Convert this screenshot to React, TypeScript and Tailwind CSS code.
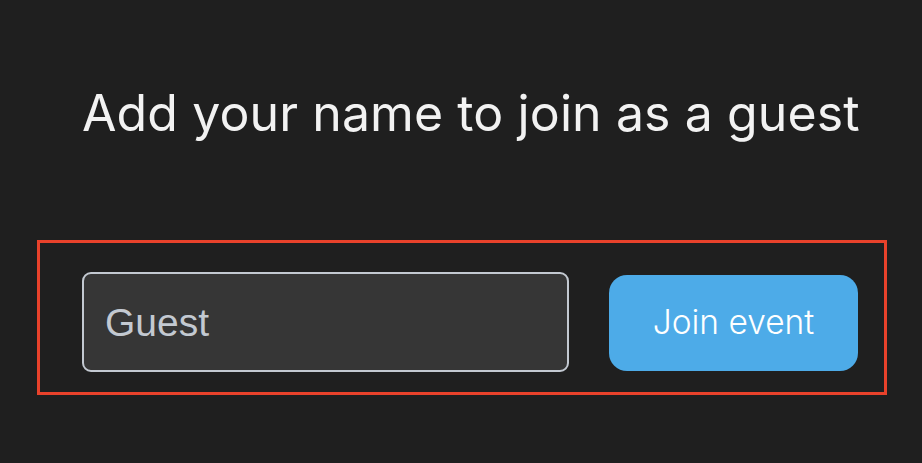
import React from "react";

export default function App() {
  return (
    <div className="w-[922px] h-[463px] bg-[#1f1f1f] flex flex-col overflow-hidden" style={{ fontFamily: "Inter, 'Noto Sans', sans-serif" }}>
      <div className="pl-[82px] pt-[82px] h-[240px]">
        <h1 className="text-[50px] leading-[62px] text-[#f2f2f2] font-normal tracking-[0.1px] whitespace-nowrap">
          Add your name to join as a guest
        </h1>
      </div>
      <div className="ml-[37px] w-[850px] h-[155px] border-[3px] border-[#e8422b] flex items-start pl-[42px] pr-[26px]">
        <div className="mt-[29px] w-[487px] h-[100px] rounded-[9px] border-2 border-[#c3c9d1] bg-[#363636] flex items-center pl-[21px]">
          <span className="text-[39px] text-[#c3c9d1] leading-none" style={{ fontFamily: "'Liberation Sans', Arial, sans-serif" }}>Guest</span>
        </div>
        <div className="mt-[32px] ml-[40px] w-[249px] h-[96px] rounded-[18px] bg-[#4dabe8] flex items-center justify-center">
          <span className="text-[33.5px] text-white leading-none font-light">Join event</span>
        </div>
      </div>
    </div>
  );
}
